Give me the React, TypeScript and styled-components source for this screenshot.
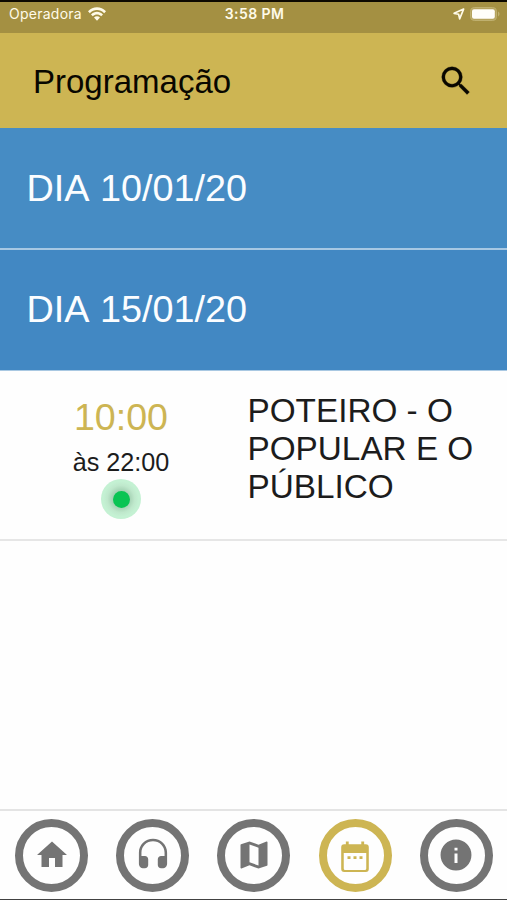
import React from 'react';
import styled, { createGlobalStyle } from 'styled-components';

const GOLD = '#cdb553';
const GRAY = '#747474';

const GlobalStyle = createGlobalStyle`
  *, *::before, *::after { box-sizing: border-box; }
  body { margin: 0; background: #fff; }
  h1, h2, p { margin: 0; font-weight: 400; }
`;

const Screen = styled.div`
  display: flex;
  flex-direction: column;
  width: 507px;
  height: 900px;
  overflow: hidden;
  background: #fefefe;
  border-top: 2px solid #0d0900;
  border-bottom: 1px solid #414141;
  font-family: 'Liberation Sans', Arial, sans-serif;
  color: #1c1c1c;
`;

const StatusBar = styled.div`
  display: grid;
  grid-template-columns: 1fr auto 1fr;
  align-items: center;
  height: 31px;
  padding: 0 7px 8px 9px;
  background: #a49042;
  color: #fffbe9;
  font-family: Inter, sans-serif;
  font-size: 14px;
  line-height: 17px;
`;

const Carrier = styled.div`
  display: flex;
  align-items: center;
  gap: 6px;
  letter-spacing: 0.25px;
`;

const Clock = styled.div`
  font-weight: 600;
  font-size: 14px;
  letter-spacing: 0.4px;
`;

const Indicators = styled.div`
  display: flex;
  align-items: center;
  justify-content: flex-end;
  gap: 5px;
`;

const Header = styled.header`
  display: flex;
  align-items: center;
  justify-content: space-between;
  height: 95px;
  padding: 2px 32px 0 33px;
  background: ${GOLD};
  color: #090700;
`;

const Title = styled.h1`
  font-size: 33px;
  line-height: 40px;
`;

const SearchButton = styled.button`
  display: flex;
  padding: 0;
  border: 0;
  margin-top: -2px;
  background: none;
  color: inherit;
`;

const Day = styled.h2<{ $open?: boolean }>`
  display: flex;
  align-items: center;
  height: ${(p) => (p.$open ? 121 : 122)}px;
  padding: ${(p) => (p.$open ? '0 0 2px 26.5px' : '0 0 0 26.5px')};
  border-bottom: ${(p) => (p.$open ? '1px solid #a9c8e2' : '2px solid #a7c8e3')};
  background: ${(p) => (p.$open ? '#4288c3' : '#468cc4')};
  color: #fbfdff;
  font-size: 37.8px;
  line-height: 44px;
  font-kerning: none;
`;

const Event = styled.article`
  display: grid;
  grid-template-columns: 242px 1fr;
  height: 169.5px;
  border-bottom: 2px solid #e6e6e6;
`;

const Schedule = styled.div`
  display: flex;
  flex-direction: column;
  align-items: center;
  padding-top: 24px;
`;

const Start = styled.p`
  color: ${GOLD};
  font-size: 37.6px;
  line-height: 44px;
`;

const End = styled.p`
  margin-top: 8px;
  font-size: 25.2px;
  line-height: 30px;
`;

const LiveMarker = styled.div`
  display: flex;
  align-items: center;
  justify-content: center;
  width: 40px;
  height: 40px;
  margin-top: 2px;
  border-radius: 50%;
  background: radial-gradient(circle closest-side, #a5d2b4 42%, #bfe8cc 68%, #c4f1d3 88%);

  &::before {
    content: '';
    width: 17px;
    height: 17px;
    border-radius: 50%;
    background: #0ac453;
  }
`;

const EventName = styled.h2`
  padding: 21px 20px 0 5.5px;
  font-size: 33.3px;
  line-height: 38px;
`;

const TabBar = styled.nav`
  display: grid;
  grid-template-columns: repeat(5, 1fr);
  justify-items: center;
  align-items: start;
  height: 90px;
  margin-top: auto;
  padding: 7.5px 0 0 1px;
  border-top: 2px solid #e4e4e4;
`;

const Tab = styled.button<{ $active?: boolean }>`
  display: flex;
  align-items: center;
  justify-content: center;
  width: 73px;
  height: 73px;
  padding: 0;
  border: 8px solid currentColor;
  border-radius: 50%;
  background: #fefefe;
  color: ${(p) => (p.$active ? GOLD : GRAY)};
`;

const Glyph = styled.svg`
  display: block;
  fill: currentColor;
`;

const tabs = [
  { label: 'Início', path: 'M10 20v-6h4v6h5v-8h3L12 3 2 12h3v8z' },
  {
    label: 'Áudio',
    path: 'M12 1.2c-5.1 0-9.4 4-9.4 9.3v7.3c0 1.8 1.4 3.1 3.1 3.1h.9c1.3 0 2.2-1 2.2-2.2v-3.8c0-1.3-.9-2.2-2.2-2.2H4.3v-2.3C4.3 6 7.8 2.8 12 2.8s7.7 3.2 7.7 7.6v2.3h-2.3c-1.3 0-2.2.9-2.2 2.2v3.8c0 1.2.9 2.2 2.2 2.2h.9c1.7 0 3.1-1.3 3.1-3.1v-7.3c0-5.3-4.3-9.3-9.4-9.3z',
  },
  {
    label: 'Mapa',
    path: 'M20.5 3l-.16.03L15 5.1 9 3 3.36 4.9c-.21.07-.36.25-.36.48V20.5c0 .28.22.5.5.5l.16-.03L9 18.9l6 2.1 5.64-1.9c.21-.07.36-.25.36-.48V3.5c0-.28-.22-.5-.5-.5zM15 19l-6-2.11V5l6 2.11V19z',
  },
  {
    label: 'Programação',
    active: true,
    path: 'M19.2 4.8h-1.1V3h-1.9v1.8H7.8V3H5.9v1.8H4.8a2 2 0 0 0-2 2v14.6a2 2 0 0 0 2 2h14.4a2 2 0 0 0 2-2V6.8a2 2 0 0 0-2-2zM19.5 21a1 1 0 0 1-1 1h-13a1 1 0 0 1-1-1V10.6h15zM7 12.800h2v1.900H7zm4 0h2v1.900h-2zm4 0h2v1.900h-2z',
  },
  {
    label: 'Informações',
    path: 'M12 1.7a10.3 10.3 0 1 0 0 20.6 10.3 10.3 0 0 0 0-20.6zM13 17.3h-2V11h2zM13 9h-2V7.1h2z',
  },
];

export default function App() {
  return (
    <>
      <GlobalStyle />
      <Screen>
        <StatusBar>
          <Carrier>
            <span>Operadora</span>
            <Glyph width="18" height="14" viewBox="0 0 18 14">
              <path d="M0 4.3C5-1.2 13-1.2 18 4.3l-1.8 1.9C12.1 1.8 5.9 1.8 1.8 6.2zM3 7.4c3.4-3.7 8.6-3.7 12 0l-1.8 1.9c-2.4-2.5-6-2.5-8.4 0zM6 10.6c1.7-1.8 4.3-1.8 6 0l-3 3.1z" />
            </Glyph>
          </Carrier>
          <Clock>3:58 PM</Clock>
          <Indicators>
            <Glyph width="12" height="12" viewBox="0 0 13 13">
              <path
                d="M11.5 1.2L1.2 5.8l4.9 1 1.1 5z"
                fill="none"
                stroke="currentColor"
                strokeWidth="1.8"
                strokeLinejoin="round"
              />
            </Glyph>
            <Glyph width="30" height="14" viewBox="0 0 30 14">
              <rect x=".5" y=".5" width="26" height="13" rx="3.8" fill="#b5a35e" stroke="#bfb06f" />
              <rect x="2" y="2.3" width="22.8" height="9.4" rx="2" fill="#fffefa" />
              <path d="M28 4.6c2 .7 2 4.1 0 4.8z" fill="#bfb06f" />
            </Glyph>
          </Indicators>
        </StatusBar>

        <Header>
          <Title>Programação</Title>
          <SearchButton aria-label="Buscar">
            <Glyph width="38" height="38" viewBox="0 0 24 24">
              <path
                d="M15.5 14h-.79l-.28-.27A6.471 6.471 0 0 0 16 9.5 6.5 6.5 0 1 0 9.5 16c1.61 0 3.09-.59 4.23-1.57l.27.28v.79l5 4.99L20.49 19l-4.99-5zm-6 0C7.01 14 5 11.99 5 9.5S7.01 5 9.5 5 14 7.01 14 9.5 11.99 14 9.5 14z"
                stroke="currentColor"
                strokeWidth=".2"
              />
            </Glyph>
          </SearchButton>
        </Header>

        <Day>DIA 10/01/20</Day>
        <Day $open>DIA 15/01/20</Day>

        <Event>
          <Schedule>
            <Start>10:00</Start>
            <End>às 22:00</End>
            <LiveMarker />
          </Schedule>
          <EventName>
            POTEIRO - O
            <br />
            POPULAR E O
            <br />
            PÚBLICO
          </EventName>
        </Event>

        <TabBar>
          {tabs.map((tab) => (
            <Tab key={tab.label} $active={tab.active} aria-label={tab.label}>
              <Glyph width="36" height="36" viewBox="0 0 24 24">
                <path fillRule="evenodd" d={tab.path} />
              </Glyph>
            </Tab>
          ))}
        </TabBar>
      </Screen>
    </>
  );
}
